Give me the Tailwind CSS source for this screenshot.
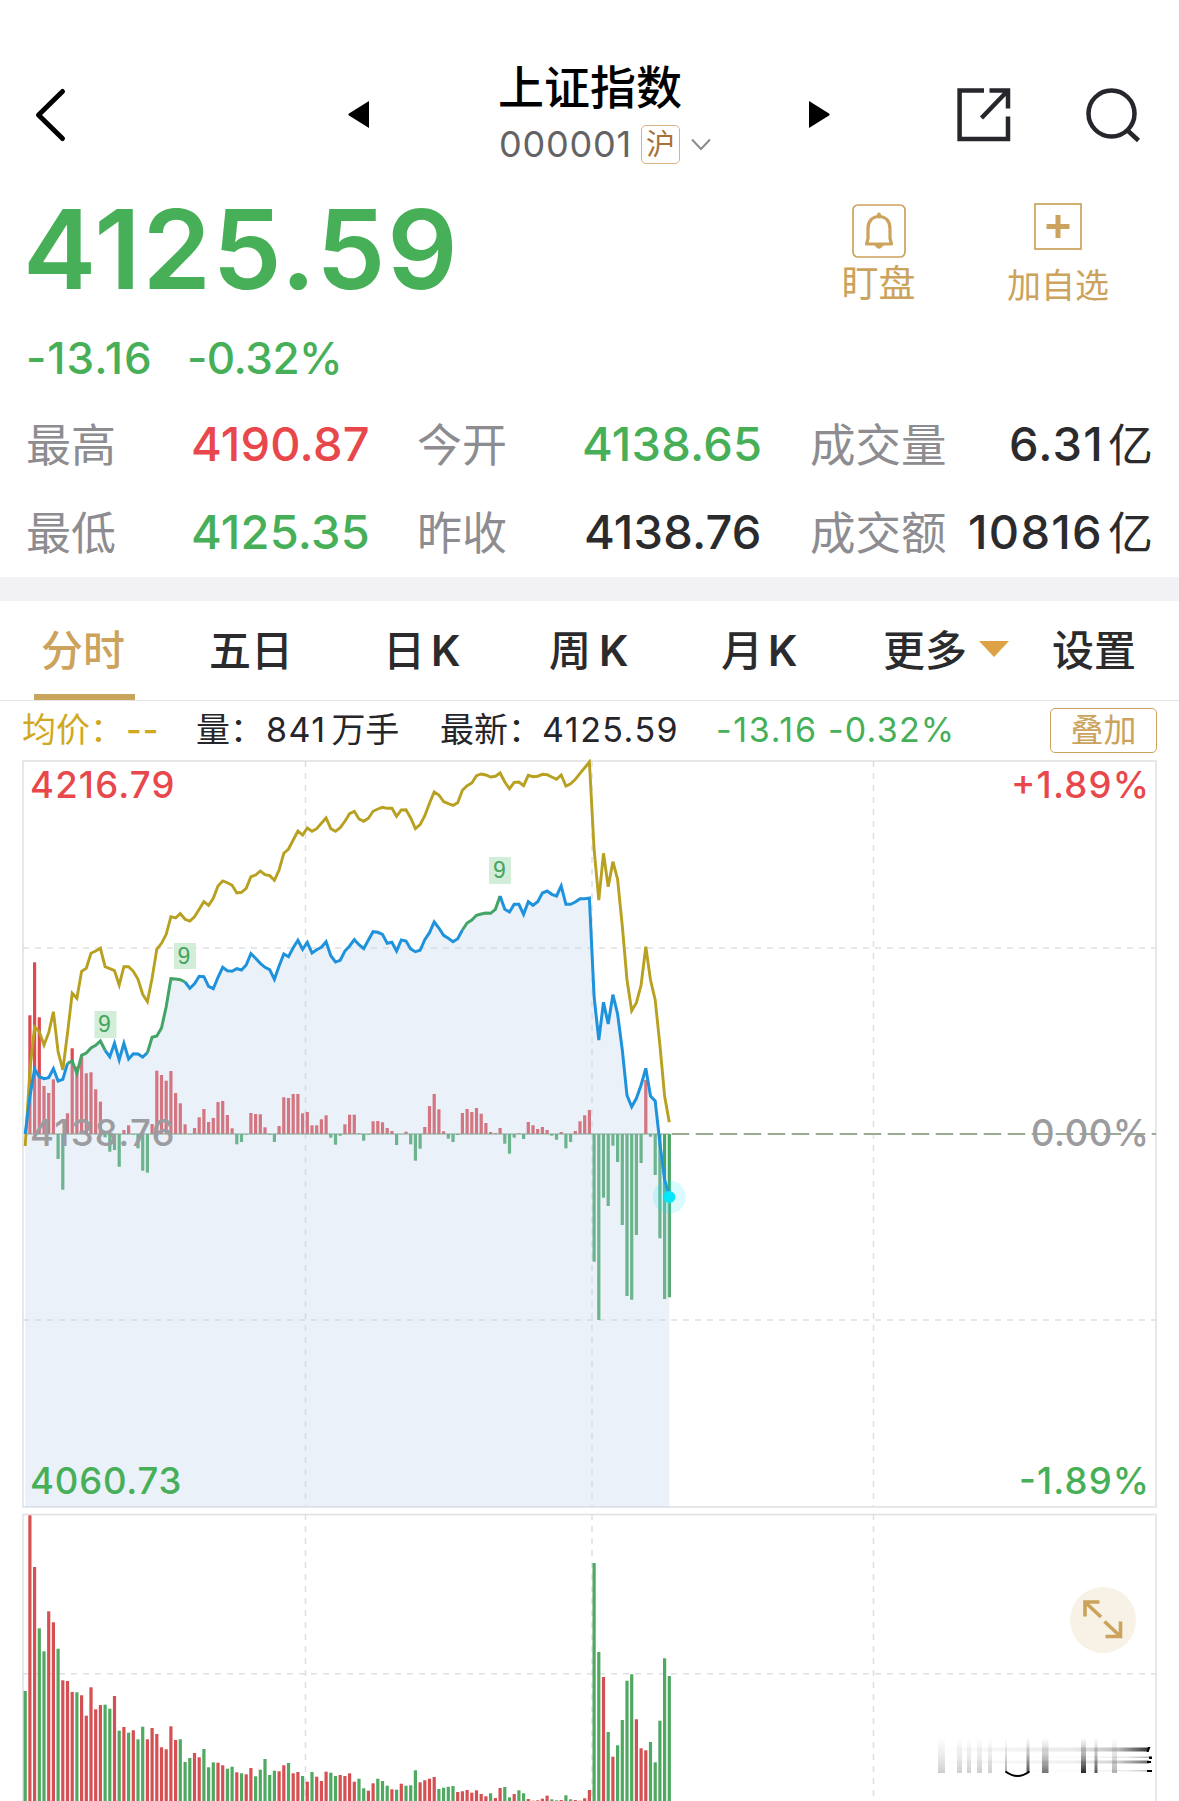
<!DOCTYPE html>
<html lang="zh-CN">
<head>
<meta charset="utf-8">
<title>上证指数</title>
<script src="https://cdn.jsdelivr.net/npm/@tailwindcss/browser@4"></script>
</head>
<body class="w-[1179px] h-[1801px] overflow-hidden bg-white font-['Inter','Noto_Sans_CJK_SC',sans-serif] text-[#2b2b2d] whitespace-nowrap">
<header class="flex h-[190px] pt-[56px]">
  <svg class="mt-[30px] ml-[32px] w-[36px] h-[58px]" viewBox="0 0 36 58" fill="none" stroke="#000" stroke-width="5" stroke-linecap="round" stroke-linejoin="round"><path d="M30.500 5.500L6.500 29L30.500 52.500"/></svg>
  <svg class="mt-[44px] ml-[280px] w-[22px] h-[29px]" viewBox="0 0 22 29"><path d="M21 1v27L1 15.500q-1.300-1 0-2z"/></svg>
  <div class="ml-[128px] w-[220px] flex flex-col">
    <div class="h-[59px] leading-[62px] text-[46px] font-medium text-black">上证指数</div>
    <div class="flex items-center h-[58px]">
      <span class="w-[143px] pl-[1px] text-[36px] tracking-[0.8px] text-[#636366]">000001</span>
      <span class="flex items-center justify-center w-[39px] h-[39px] rounded-[5px] border border-[#d9b184] text-[29px] leading-none text-[#a9713a]">沪</span>
      <svg class="ml-[11px] w-[20px] h-[13px]" viewBox="0 0 20 13" fill="none" stroke="#8b8b90" stroke-width="2"><path d="M1 1.500l9 9.500 9-9.500"/></svg>
    </div>
  </div>
  <svg class="mt-[44px] ml-[90px] w-[22px] h-[29px]" viewBox="0 0 22 29"><path d="M1 1v27L21 15.500q1.300-1 0-2z"/></svg>
  <svg class="mt-[31px] ml-[126px] w-[56px] h-[56px]" viewBox="0 0 56 56" fill="none" stroke="#26262c" stroke-width="4.500"><path d="M28 3.500H3.600v48.400H52V29.500M33.500 3.500H52V21.500M51 4.500L25.500 31"/></svg>
  <svg class="mt-[31px] ml-[73px] w-[58px] h-[56px]" viewBox="0 0 58 56" fill="none" stroke="#26262c" stroke-width="4.500"><circle cx="26.500" cy="26.500" r="23"/><path d="M41.500 42.500L53.500 53.500"/></svg>
</header>

<section class="flex h-[215px]">
  <div class="w-[842px] pl-[23px] text-[#46af58]">
    <div class="h-[122px] leading-[118px] text-[110px] font-semibold tracking-[1.600px]">4125.59</div>
    <div class="flex h-[92px] pl-[3px] items-center text-[44px] font-medium">
      <span class="w-[161px] tracking-[1px]">-13.16</span><span class="tracking-[-0.5px]">-0.32%</span>
    </div>
  </div>
  <div class="flex flex-col items-center w-[73px] pt-[14px] text-[#cba35c]">
    <svg class="w-[54px] h-[54px]" viewBox="0 0 54 54" fill="none" stroke="#cba35c"><rect x="1" y="1" width="52" height="52" rx="5" stroke-width="1.700"/><path d="M27 12.500c-7 0-11 5-11 12v10l-1.500 5.500h25L38 34.500V24.500c0-7-4-12-11-12z" stroke-width="3.200" stroke-linejoin="round"/><path d="M27 10.500v2" stroke-width="4" stroke-linecap="round"/><path d="M23 41.500q4 5.500 8 0z" fill="#cba35c" stroke-width="1"/></svg>
    <div class="mt-[3px] h-[46px] leading-[46px] text-[37px]">盯盘</div>
  </div>
  <div class="flex flex-col items-center ml-[91px] w-[104px] pt-[13px] text-[#cba35c]">
    <svg class="w-[48px] h-[47px]" viewBox="0 0 48 47" fill="none" stroke="#cba35c"><rect x="1" y="1" width="46" height="45" stroke-width="1.700"/><path d="M12.500 23.500h23M24 12v23" stroke-width="5"/></svg>
    <div class="mt-[13px] h-[46px] leading-[46px] text-[34px]">加自选</div>
  </div>
</section>

<section class="h-[172px] px-[26px] text-[47px] leading-[88px] font-medium">
  <div class="flex h-[88px] -mt-[5px]">
    <span class="w-[165px] pt-[2px] text-[45px] font-normal text-[#8d8d91]">最高</span><span class="w-[226px] tracking-[0.2px] text-[#e8474b]">4190.87</span>
    <span class="w-[165px] pt-[2px] text-[45px] font-normal text-[#8d8d91]">今开</span><span class="w-[228px] tracking-[0.2px] text-[#46af58]">4138.65</span>
    <span class="pt-[2px] text-[45.5px] font-normal text-[#8d8d91]">成交量</span><span class="ml-auto flex gap-[4px]"><i class="not-italic tracking-[1.200px]">6.31</i><i class="pt-[2px] text-[45px] not-italic font-normal">亿</i></span>
  </div>
  <div class="flex h-[88px]">
    <span class="w-[165px] pt-[2px] text-[45px] font-normal text-[#8d8d91]">最低</span><span class="w-[226px] tracking-[0.2px] text-[#46af58]">4125.35</span>
    <span class="w-[167px] pt-[2px] text-[45px] font-normal text-[#8d8d91]">昨收</span><span class="w-[226px] tracking-[0.2px]">4138.76</span>
    <span class="pt-[2px] text-[45.5px] font-normal text-[#8d8d91]">成交额</span><span class="ml-auto flex gap-[5px]"><i class="not-italic tracking-[1.300px]">10816</i><i class="pt-[2px] text-[45px] not-italic font-normal">亿</i></span>
  </div>
</section>
<div class="mt-[5px] h-[24px] bg-[#f2f2f5]"></div>

<nav class="flex h-[100px] border-b border-[#e5e5e8] pl-[34px] text-[42px] leading-[99px] font-medium">
  <div class="w-[101px] mr-[74px] pl-[7px] h-[99px] border-b-[6px] border-[#c9a45c] text-[#cba35c]">分时</div>
  <div class="w-[174px]">五日</div>
  <div class="flex w-[166px] gap-[6px]"><span>日</span><span class="font-semibold">K</span></div>
  <div class="flex w-[172px] gap-[8px]"><span>周</span><span class="font-semibold">K</span></div>
  <div class="flex w-[162px] gap-[5px]"><span>月</span><span class="font-semibold">K</span></div>
  <div class="flex w-[169px]">更多<svg class="mt-[40px] ml-[12px] w-[30px] h-[16px]" viewBox="0 0 30 16"><path d="M0 0h30L15 16z" fill="#dda246"/></svg></div>
  <div>设置</div>
</nav>

<div class="flex items-center h-[56px] pl-[22px] text-[34px] text-[#25252a]">
  <span class="w-[104px] text-[#d0a91f]">均价：</span><span class="w-[70px] tracking-[1px] font-medium text-[#d0a91f]">--</span>
  <span class="w-[70px]">量：</span><span class="w-[174px] tracking-[1.4px]">841<i class="not-italic tracking-normal ml-[5px]">万手</i></span>
  <span class="w-[102px]">最新：</span><span class="w-[174px] tracking-[1.5px]">4125.59</span>
  <span class="w-[112px] tracking-[1.7px] text-[#46af58]">-13.16</span><span class="tracking-[1.2px] text-[#46af58]">-0.32%</span>
  <span class="absolute left-[1050px] top-[708px] flex items-center justify-center w-[107px] h-[45px] rounded-[5px] border border-[#cba35c] text-[33px] text-[#cba35c]">叠加</span>
</div>

<svg class="block mt-[2px] w-[1179px] h-[1042px]" viewBox="0 759 1179 1042" font-family="Inter, sans-serif" font-size="36.500" font-weight="450">
  <g fill="none" stroke="#dedfe2" stroke-width="1.500">
    <g stroke-dasharray="6 6"><path d="M305.500 761V1507M592 761V1507M873.500 761V1507M23 948H1156M23 1320H1156"/><path d="M305.500 1514V1801M592 1514V1801M873.500 1514V1801M23 1673.700H1156"/></g>
    <path d="M23 761H1156V1507H23zM23 1801V1514.500H1156V1801"/>
  </g>
  <g id="flow"></g>
  <path id="area" fill="rgb(189,211,236)" fill-opacity=".32"/>
  <path d="M25 1134H670" stroke="#7fa68f" stroke-width="1.200"/>
  <path d="M671.700 1134H1156" stroke="#9aab94" stroke-width="1.800" stroke-dasharray="17.500 6.500"/>
  <path id="avg" fill="none" stroke="#b8a021" stroke-width="2.900"/>
  <g id="price" fill="none" stroke-width="3"></g>
  <circle cx="669.300" cy="1197" r="16.500" fill="#00e5f5" fill-opacity=".15"/><circle cx="669.300" cy="1197" r="6" fill="#00e8fa"/>
  <g id="volume"></g>
  <g font-family="Liberation Sans, sans-serif" font-size="23" fill="#46a45e" text-anchor="middle">
    <path d="M94.500 1011h22v27h-22zM174 943h22v26h-22zM489 857h22v27h-22z" fill="#d3eed8"/>
    <text x="104.500" y="1032">9</text><text x="184" y="964">9</text><text x="499.500" y="878">9</text>
  </g>
  <text x="30" y="798" textLength="144.500" fill="#e8474b">4216.79</text>
  <text x="30" y="1146" textLength="144.500" fill="#9c9ca0">4138.76</text>
  <text x="30" y="1494" textLength="151.500" fill="#46af58">4060.73</text>
  <text x="1011" y="798" textLength="138" fill="#e8474b">+1.89%</text>
  <text x="1031" y="1146" textLength="118" fill="#9c9ca0">0.00%</text>
  <text x="1019" y="1494" textLength="130" fill="#46af58">-1.89%</text>
  <circle cx="1103" cy="1620" r="33" fill="#f8f2e6"/>
  <path d="M1085 1616.500V1602H1099.500M1085 1602L1101 1617M1104.500 1621.500L1120 1636M1120.500 1621.500V1636.500H1105.500" fill="none" stroke="#cba35c" stroke-width="3.600"/>
  <defs>
    <linearGradient id="fv" x1="0" y1="0" x2="0" y2="1"><stop offset="0" stop-color="#111" stop-opacity="0"/><stop offset=".5" stop-color="#111" stop-opacity=".35"/><stop offset="1" stop-color="#000" stop-opacity=".85"/></linearGradient>
    <linearGradient id="fh"><stop offset="0" stop-color="#111" stop-opacity="0"/><stop offset=".65" stop-color="#111" stop-opacity=".1"/><stop offset=".85" stop-color="#111" stop-opacity=".3"/><stop offset="1" stop-color="#000" stop-opacity=".9"/></linearGradient>
  </defs>
  <g fill="url(#fv)">
    <g opacity=".22"><path d="M938 1738h7v35h-7z"/><path d="M957 1738h5v35h-5z"/><path d="M967 1738h4v35h-4z"/><path d="M977 1738h5v35h-5z"/><path d="M988 1738h4v35h-4z"/></g>
    <path d="M1005 1738h2v35h-2z" opacity=".4"/><path d="M1026.500 1738h3v34h-3z" opacity=".8"/><path d="M1042 1738h6.500v35h-6.500z" opacity=".65"/><path d="M1081 1738h5v35h-5z"/><path d="M1094.500 1738h3v35h-3z" opacity=".8"/><path d="M1112 1738h5v35h-5z" opacity=".35"/>
  </g>
  <g fill="url(#fh)"><path d="M935 1747.500h214v4H935z" opacity=".9"/><path d="M1000 1756.500h150v1.500h-150z" opacity=".35"/><path d="M935 1760.500h214v3H935z" opacity=".65"/><path d="M1000 1770h150v1.500h-150z" opacity=".3"/></g>
  <path d="M1148 1747h2.500l-2 5h-2zM1149 1756.500h3v2.500h-3zM1147 1761h4v2h-4zM1147 1770h5v2h-5z"/>
  <path d="M1005.500 1771.500q12 9 24 0" fill="none" stroke="#000" stroke-width="2"/>
</svg>
<script>
const X = i => 25.2 + i * 4.7015, Y = v => 750 + v / 3;
const flow = [1152,796,637,802,1008,1029,988,1227,1319,1090,895,950,920,970,967,1018,1055,1162,1205,1200,1250,1140,1126,1154,1195,1262,1268,1122,962,975,992,963,1029,1060,1123,1153,1134,1102,1077,1116,1104,1056,1053,1095,1135,1183,1176,1154,1089,1092,1093,1132,1154,1176,1128,1042,1044,1032,1032,1090,1086,1126,1126,1108,1096,1163,1184,1157,1123,1094,1094,1150,1172,1154,1114,1113,1117,1134,1143,1185,1153,1145,1183,1232,1196,1131,1068,1032,1078,1144,1166,1176,1155,1089,1077,1086,1074,1091,1119,1146,1149,1134,1181,1211,1163,1150,1167,1116,1126,1137,1131,1140,1157,1169,1146,1195,1176,1143,1114,1096,1080,1535,1710,1343,1368,1187,1236,1425,1638,1649,1455,1239,990,1160,1275,1465,1647,1642];
const avg = [1188,960,830,845,885,848,785,905,960,850,730,745,664,655,610,603,595,650,656,662,705,650,650,664,688,733,755,685,598,580,553,500,504,491,508,513,500,478,455,466,445,408,393,398,406,429,427,415,380,375,363,374,377,391,360,310,297,270,243,255,234,244,236,220,204,236,244,233,214,191,184,207,214,205,184,177,172,175,175,199,180,179,204,236,224,197,160,126,135,155,161,166,158,121,107,99,77,72,75,81,79,69,96,116,97,96,107,76,80,79,73,74,81,88,75,108,101,88,70,53,36,298,450,310,410,335,388,528,690,782,758,705,590,690,750,885,1038,1117];
const price = [1152,1040,957,980,986,983,956,993,988,940,933,970,916,909,894,886,873,901,920,880,930,880,927,911,912,921,908,862,858,834,770,686,687,689,696,715,701,679,680,709,716,682,652,662,664,656,660,645,611,625,640,652,659,688,648,612,620,593,571,598,577,609,599,592,575,617,636,631,603,588,569,584,596,570,545,547,553,580,577,603,570,573,597,605,601,569,548,516,534,556,565,575,566,540,519,510,496,492,489,490,478,438,478,486,463,463,493,455,466,455,429,423,433,438,408,463,463,456,446,446,444,740,870,757,822,734,792,900,1036,1070,1045,1005,955,1038,1053,1180,1290,1338];
const vol = 'g693 r166 r321 g505 g574 r454 r487 g566 r661 r663 r696 g697 r706 r767 r682 r748 r735 g734 g746 r708 g812 r801 g818 r811 g838 g800 r838 r804 r822 r862 r868 r799 r840 g838 g906 g894 r879 r892 g867 g922 g907 r908 r916 g926 g920 r937 g940 r943 r924 g949 g929 g897 g945 g932 r934 r916 g909 r940 r936 g948 r965 g936 r950 r963 r935 g938 g948 r945 r948 r940 r965 g956 g985 r992 r970 g956 g963 g977 r988 g989 r971 g977 g976 g931 r967 r961 r956 r951 g987 g983 g980 g978 r996 r994 r990 r998 r991 r1002 r1009 g1000 r1014 r984 g981 g1012 r1002 g991 g1000 r1017 r1022 r1021 r1016 r1007 g1018 g1021 r1020 g1006 g1018 r1020 r1022 r1015 r990 g309 g576 r651 g816 r890 g856 g780 g662 g643 r778 r865 r871 g846 g907 g782 g595 g648'.split(' ');
const R = '#d65053', G = '#50a961';
const line = (a, s = 0, e = a.length - 1) => 'M' + a.slice(s, e + 1).map((v, k) => X(s + k).toFixed(1) + ' ' + Y(v).toFixed(1)).join('L');
const bar = (i, a, b, c) => `<rect x="${(X(i) - 1.6).toFixed(1)}" y="${a.toFixed(1)}" width="3.2" height="${(b - a).toFixed(1)}" fill="${c}"/>`;
const $ = id => document.getElementById(id);
$('flow').innerHTML = flow.map((v, i) => v < 1152 ? bar(i, Y(v), 1134, '#dd4a50') : bar(i, 1134, Y(v), '#46a562')).join('');
$('volume').innerHTML = vol.map((s, i) => bar(i, 1460 + s.slice(1) / 3, 1801, s[0] === 'r' ? R : G)).join('');
$('area').setAttribute('d', line(price) + 'V1507H25.2z');
$('avg').setAttribute('d', line(avg));
$('price').innerHTML = [[0,9,0],[9,17,1],[17,26,0],[26,34,1],[34,93,0],[93,101,1],[101,137,0]].map(([s, e, g]) => `<path d="${line(price, s, e)}" stroke="${g ? '#42a465' : '#1f92dc'}"/>`).join('');
</script>
</body>
</html>
